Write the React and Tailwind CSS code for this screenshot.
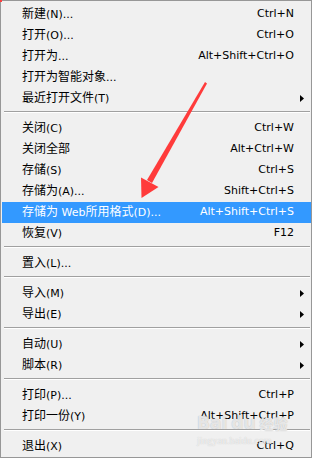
import React from "react";

const FONT = { fontFamily: '"DejaVu Sans", "Noto Sans CJK SC", sans-serif' };

const groups = [
  [
    ["新建(N)...", "Ctrl+N"],
    ["打开(O)...", "Ctrl+O"],
    ["打开为...", "Alt+Shift+Ctrl+O"],
    ["打开为智能对象...", ""],
    ["最近打开文件(T)", "", true],
  ],
  [
    ["关闭(C)", "Ctrl+W"],
    ["关闭全部", "Alt+Ctrl+W"],
    ["存储(S)", "Ctrl+S"],
    ["存储为(A)...", "Shift+Ctrl+S"],
    ["存储为 Web所用格式(D)...", "Alt+Shift+Ctrl+S", false, true],
    ["恢复(V)", "F12"],
  ],
  [["置入(L)...", ""]],
  [
    ["导入(M)", "", true],
    ["导出(E)", "", true],
  ],
  [
    ["自动(U)", "", true],
    ["脚本(R)", "", true],
  ],
  [
    ["打印(P)...", "Ctrl+P"],
    ["打印一份(Y)", "Alt+Shift+Ctrl+P"],
  ],
  [["退出(X)", "Ctrl+Q"]],
];

function Label({ text }) {
  const parts = text.match(/[\u4e00-\u9fff]+|[^\u4e00-\u9fff]+/g) || [];
  return (
    <span className="flex-1 whitespace-pre">
      {parts.map((p, i) =>
        /[\u4e00-\u9fff]/.test(p) ? (
          <span key={i} className="text-[12px]">{p}</span>
        ) : (
          <span key={i}>{p}</span>
        )
      )}
    </span>
  );
}

function Row({ label, shortcut, sub, active }) {
  return (
    <div
      className={
        "relative flex h-[21px] items-center pl-[20px] pr-[17px] text-[11px] " +
        (active ? "bg-[#3399ff] text-white" : "text-black")
      }
    >
      <Label text={label} />
      <span className="whitespace-pre">{shortcut}</span>
      {sub && (
        <svg
          className="absolute right-[7px] top-[7px]"
          width="4"
          height="7"
          viewBox="0 0 4 7"
        >
          <path d="M0 0 L4 3.5 L0 7 Z" fill="#000" />
        </svg>
      )}
    </div>
  );
}

function Sep() {
  return (
    <div className="h-[9px] pl-[2px] pr-[1px] pt-[2px]">
      <div className="h-px bg-[#a0a0a0]" />
      <div className="h-px bg-white" />
    </div>
  );
}

export default function App() {
  return (
    <div className="relative h-[459px] w-[314px] bg-white" style={FONT}>
      <div className="h-[458px] w-[312px] border border-[#979797] bg-[#f0f0f0] pt-[3px] pl-[1px]">
        {groups.map((g, gi) => (
          <React.Fragment key={gi}>
            {gi > 0 && <Sep />}
            {g.map(([label, sc, sub, active], i) => (
              <Row key={i} label={label} shortcut={sc} sub={sub} active={active} />
            ))}
          </React.Fragment>
        ))}
      </div>

      <div className="absolute left-0 top-0 h-[2px] w-[2px] bg-[#ff4040]" />

      {/* watermark */}
      <div className="pointer-events-none absolute left-[197px] top-[415px] flex items-center gap-[4px] text-[17px] font-bold leading-none text-white/70 [text-shadow:0_0_1px_#aaa]">
        <span>Bai</span>
        <span>du</span>
        <span className="text-[14px]">经验</span>
      </div>
      <div
        className="pointer-events-none absolute left-[197px] top-[436px] text-[10px] leading-none text-white/70 [text-shadow:0_0_1px_#bbb]"
        style={{ fontFamily: '"Liberation Serif", serif' }}
      >
        jingyan.baidu.com
      </div>

      {/* red arrow */}
      <svg className="pointer-events-none absolute left-0 top-0" width="314" height="459">
        <polygon points="205,82 207,83.5 152,183 147,180" fill="#ff3b3b" />
        <polygon points="141,177.5 158.5,187 141.5,198" fill="#ff3b3b" />
      </svg>
    </div>
  );
}
